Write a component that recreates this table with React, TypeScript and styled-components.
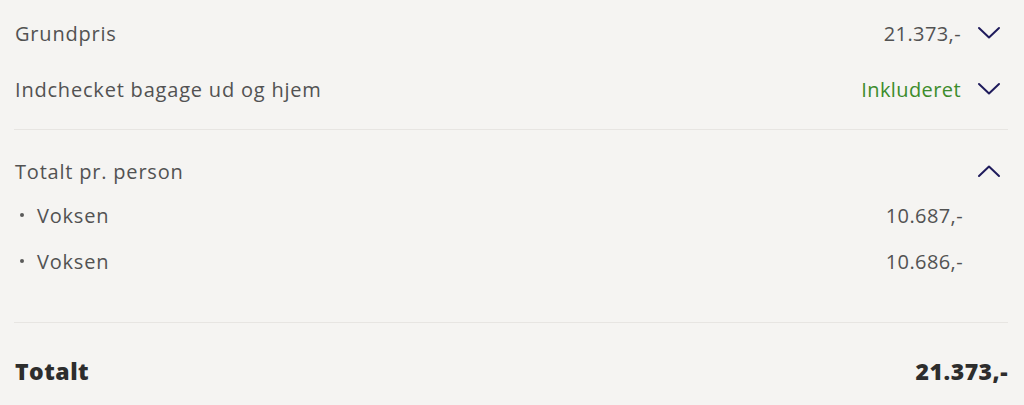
import styled, { createGlobalStyle } from 'styled-components'

const GlobalStyle = createGlobalStyle`
  body {
    margin: 0;
    background: #f5f4f2;
    font-family: "Open Sans", Lato, sans-serif;
    color: #525252;
    overflow: hidden;
  }
`

const Container = styled.main`
  padding: 5px 16px 0 14px;
`

const Row = styled.div<{ $height: number }>`
  height: ${(p) => p.$height}px;
  display: flex;
  align-items: center;
  justify-content: space-between;
  font-size: 20px;
  letter-spacing: 0.8px;
  padding-left: 1px;
`

const RightGroup = styled.div`
  display: flex;
  align-items: center;
  gap: 16px;
`

const Value = styled.span<{ $green?: boolean }>`
  color: ${(p) => (p.$green ? '#3c8c2c' : '#525252')};
  letter-spacing: 0.4px;
`

const IconSlot = styled.span`
  width: 24px;
  height: 24px;
  display: flex;
  align-items: center;
  justify-content: center;
  margin-right: 7px;
`

const Divider = styled.hr<{ $top: number }>`
  border: 0;
  height: 1px;
  background: #e7e5e2;
  margin: ${(p) => p.$top}px 0 0;
`

const Spacer = styled.div`
  height: 20px;
`

const Bullet = styled.span`
  display: flex;
  align-items: center;
  &::before {
    content: '';
    width: 4px;
    height: 4px;
    border-radius: 50%;
    background: #5a5a5a;
    margin: 0 13px 0 5px;
  }
`

const SubValue = styled.span`
  margin-right: 45px;
  letter-spacing: 0.4px;
`

const TotalRow = styled.div`
  display: flex;
  justify-content: space-between;
  padding: 36px 0 0 1px;
  line-height: 24px;
  font-size: 23px;
  font-weight: 800;
  letter-spacing: 0.5px;
  color: #2d2d2d;
`

const Chevron = ({ up }: { up?: boolean }) => (
  <svg width="24" height="14" viewBox="0 0 24 14" fill="none">
    <path
      d={up ? 'M2 12L12 2.5L22 12' : 'M2 2L12 11.5L22 2'}
      stroke="#1f1b5c"
      strokeWidth="2"
      strokeLinecap="round"
      strokeLinejoin="round"
    />
  </svg>
)

const App = () => {
  return (
    <>
      <GlobalStyle />
      <Container>
        <Row $height={56}>
          <span>Grundpris</span>
          <RightGroup>
            <Value>21.373,-</Value>
            <IconSlot>
              <Chevron />
            </IconSlot>
          </RightGroup>
        </Row>
        <Row $height={56}>
          <span>Indchecket bagage ud og hjem</span>
          <RightGroup>
            <Value $green>Inkluderet</Value>
            <IconSlot>
              <Chevron />
            </IconSlot>
          </RightGroup>
        </Row>
        <Divider $top={12} />
        <Spacer />
        <Row $height={42}>
          <span>Totalt pr. person</span>
          <IconSlot>
            <Chevron up />
          </IconSlot>
        </Row>
        <Row $height={46}>
          <Bullet>Voksen</Bullet>
          <SubValue>10.687,-</SubValue>
        </Row>
        <Row $height={46}>
          <Bullet>Voksen</Bullet>
          <SubValue>10.686,-</SubValue>
        </Row>
        <Divider $top={38} />
        <TotalRow>
          <span>Totalt</span>
          <span>21.373,-</span>
        </TotalRow>
      </Container>
    </>
  )
}

export default App
